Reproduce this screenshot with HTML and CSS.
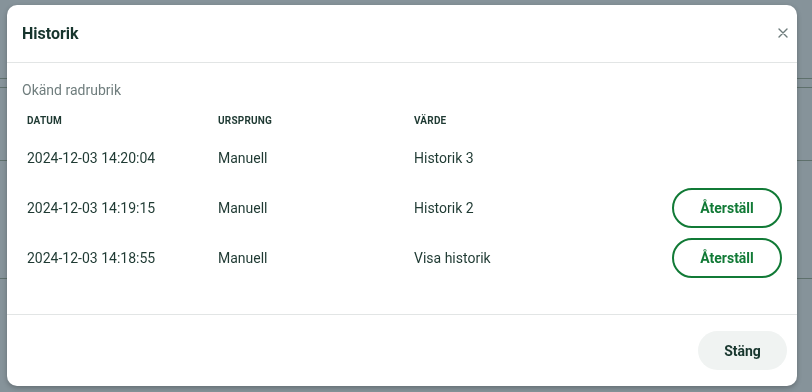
FILE: index.html
```html
<!DOCTYPE html>
<html lang="sv">
<head>
    <meta charset="UTF-8">
    <meta name="viewport" content="width=device-width, initial-scale=1.0">
    <title>Historik</title>
    <link rel="stylesheet" href="styles.css">
</head>
<body>
    <!-- sidan bakom dialogen -->
    <div class="page">
        <div class="pageRow first"></div>
        <div class="pageRow"></div>
        <div class="pageRow last"></div>
    </div>

    <div class="backdrop">
        <div class="modal">
            <div class="modalHeader">
                <h2>Historik</h2>
                <button class="closeBtn" aria-label="Stäng">
                    <svg width="10" height="10" viewBox="0 0 10 10">
                        <path d="M1 1 L9 9 M9 1 L1 9" stroke="#6d7b7b" stroke-width="1.4" stroke-linecap="round"/>
                    </svg>
                </button>
            </div>
            <div class="modalBody">
                <p class="rowTitle">Okänd radrubrik</p>
                <table class="history">
                    <thead>
                        <tr>
                            <th class="colDate">Datum</th>
                            <th class="colOrigin">Ursprung</th>
                            <th>Värde</th>
                            <th></th>
                        </tr>
                    </thead>
                    <tbody>
                        <tr>
                            <td>2024-12-03 14:20:04</td>
                            <td>Manuell</td>
                            <td>Historik 3</td>
                            <td></td>
                        </tr>
                        <tr>
                            <td>2024-12-03 14:19:15</td>
                            <td>Manuell</td>
                            <td>Historik 2</td>
                            <td class="actions"><button class="outlineBtn">Återställ</button></td>
                        </tr>
                        <tr>
                            <td>2024-12-03 14:18:55</td>
                            <td>Manuell</td>
                            <td>Visa historik</td>
                            <td class="actions"><button class="outlineBtn">Återställ</button></td>
                        </tr>
                    </tbody>
                </table>
            </div>
            <div class="modalFooter">
                <button class="softBtn">Stäng</button>
            </div>
        </div>
    </div>
</body>
</html>
```

FILE: styles.css
```css
body {
    margin: 0;
    padding: 0;
    background-color: #86939a;
    font-family: Roboto, "Liberation Sans", sans-serif;
    color: #1f3a33;
    overflow: hidden;
}
.page {
    padding-top: 78px;
}
.pageRow {
    height: 72px;
    border-bottom: 1px solid #5e706c;
}
.pageRow.first {
    height: 8px;
    border-top: 1px solid #5e706c;
}
.pageRow.last {
    height: 117px;
}
.backdrop {
    position: fixed;
    top: 0;
    left: 0;
    width: 100%;
    height: 100%;
}
.modal {
    position: absolute;
    top: 5px;
    left: 7px;
    width: 790px;
    height: 381px;
    background: #ffffff;
    border-radius: 10px;
    box-shadow: 0 2px 5px rgba(0, 0, 0, 0.25);
    display: flex;
    flex-direction: column;
}
.modalHeader {
    height: 57px;
    display: flex;
    align-items: center;
    justify-content: space-between;
    padding: 0 9px 0 15px;
    border-bottom: 1px solid #e2e5e5;
}
.modalHeader h2 {
    margin: 0;
    font-size: 16px;
    font-weight: 700;
    color: #17352d;
}
.closeBtn {
    background: none;
    border: none;
    padding: 0;
    width: 10px;
    height: 10px;
    margin-top: -6px;
    cursor: pointer;
}
.modalBody {
    flex: 1;
    padding: 17px 10px 0 15px;
}
.rowTitle {
    margin: 0 0 7px 0;
    font-size: 14px;
    line-height: 20px;
    color: #6f7d7d;
}
.history {
    width: 100%;
    border-collapse: collapse;
}
.history th {
    text-align: left;
    font-size: 10px;
    font-weight: 700;
    text-transform: uppercase;
    color: #1f3a33;
    padding: 0 5px;
    height: 26px;
    letter-spacing: 0.2px;
}
.history .colDate {
    width: 181px;
}
.history .colOrigin {
    width: 186px;
}
.history td {
    font-size: 14px;
    padding: 0 5px;
    height: 50px;
}
.history .actions {
    text-align: right;
}
.outlineBtn {
    font-family: inherit;
    font-size: 14px;
    font-weight: 700;
    color: #117a36;
    background: #ffffff;
    border: 2px solid #117a36;
    border-radius: 20px;
    width: 110px;
    height: 40px;
    cursor: pointer;
}
.modalFooter {
    height: 71px;
    border-top: 1px solid #e2e5e5;
    display: flex;
    align-items: center;
    justify-content: flex-end;
    padding: 0 10px;
}
.softBtn {
    font-family: inherit;
    font-size: 14px;
    font-weight: 700;
    color: #17352d;
    background: #f0f3f2;
    border: none;
    border-radius: 20px;
    width: 89px;
    height: 39px;
    cursor: pointer;
}
```
